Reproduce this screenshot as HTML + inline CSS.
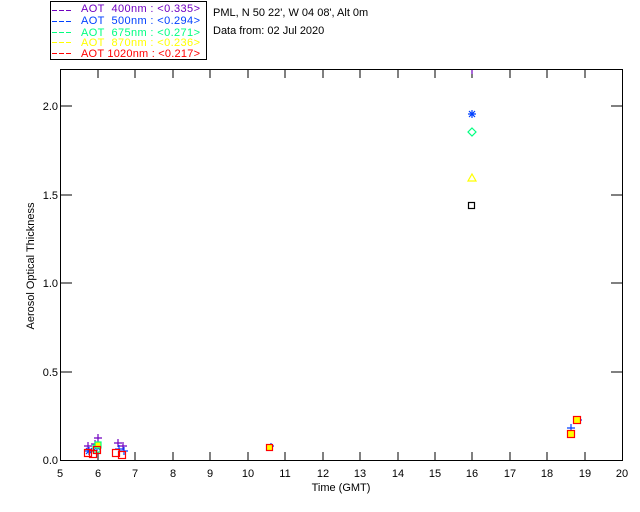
<!DOCTYPE html>
<html><head><style>body{margin:0;background:#fff}svg{display:block}text{font-family:"Liberation Sans",sans-serif;font-size:11px;white-space:pre}</style></head><body>
<svg width="640" height="512" xmlns="http://www.w3.org/2000/svg">
<rect width="640" height="512" fill="#fff"/>
<rect x="50.5" y="1.5" width="156" height="58" fill="none" stroke="#000"/>
<g stroke-width="1">
<path d="M52 10.5h20" stroke="#7000c0" stroke-dasharray="5 2"/>
<path d="M52 21.5h20" stroke="#0040ff" stroke-dasharray="5 2"/>
<path d="M52 32.5h20" stroke="#00ff80" stroke-dasharray="5 2"/>
<path d="M52 42.5h20" stroke="#ffff00" stroke-dasharray="5 2"/>
<path d="M52 53.5h20" stroke="#ff0000" stroke-dasharray="5 2"/>
</g>
<text x="81" y="12" fill="#7000c0" textLength="119" xml:space="preserve">AOT  400nm : &lt;0.335&gt;</text>
<text x="81" y="24" fill="#0040ff" textLength="119" xml:space="preserve">AOT  500nm : &lt;0.294&gt;</text>
<text x="81" y="36" fill="#00ff80" textLength="119" xml:space="preserve">AOT  675nm : &lt;0.271&gt;</text>
<text x="81" y="46" fill="#ffff00" textLength="119" xml:space="preserve">AOT  870nm : &lt;0.236&gt;</text>
<text x="81" y="57" fill="#ff0000" textLength="119" xml:space="preserve">AOT 1020nm : &lt;0.217&gt;</text>
<text x="213" y="16" fill="#000">PML, N 50 22', W 04 08', Alt 0m</text>
<text x="213" y="34" fill="#000">Data from: 02 Jul 2020</text>
<rect x="60.5" y="69.5" width="562" height="391" fill="none" stroke="#000"/>
<g stroke="#000">
<path d="M98 460v-8M135 460v-8M173 460v-8M210 460v-8M248 460v-8M285 460v-8M323 460v-8M360 460v-8M398 460v-8M435 460v-8M472 460v-8M510 460v-8M547 460v-8M585 460v-8"/>
<path d="M98 70v8M135 70v8M173 70v8M210 70v8M248 70v8M285 70v8M323 70v8M360 70v8M398 70v8M435 70v8M472 70v8M510 70v8M547 70v8M585 70v8"/>
<path d="M61 372h11M61 283h11M61 195h11M61 106h11M622 372h-11M622 283h-11M622 195h-11M622 106h-11"/>
</g>
<g fill="#000" text-anchor="middle">
<text x="60" y="477">5</text><text x="98" y="477">6</text><text x="135" y="477">7</text><text x="173" y="477">8</text><text x="210" y="477">9</text><text x="248" y="477">10</text><text x="285" y="477">11</text><text x="323" y="477">12</text><text x="360" y="477">13</text><text x="398" y="477">14</text><text x="435" y="477">15</text><text x="472" y="477">16</text><text x="510" y="477">17</text><text x="547" y="477">18</text><text x="585" y="477">19</text><text x="622" y="477">20</text>
<text x="341" y="491">Time (GMT)</text>
</g>
<g fill="#000" text-anchor="end">
<text x="58" y="464">0.0</text><text x="58" y="376">0.5</text><text x="58" y="287">1.0</text><text x="58" y="199">1.5</text><text x="58" y="110">2.0</text>
</g>
<text transform="translate(34,266) rotate(-90)" text-anchor="middle" fill="#000" font-size="10">Aerosol Optical Thickness</text>
<g fill="none" stroke-width="1.2">
<path d="M472 70v4" stroke="#7000c0"/>
<path d="M468 114h8M472 110v8M469 111l6 6M475 111l-6 6" stroke="#0040ff"/>
<path d="M472 128l4 4-4 4-4-4z" stroke="#00ff80"/>
<path d="M472 174l4 7h-8z" stroke="#ffff00"/>
<rect x="468.5" y="202.5" width="6" height="6" stroke="#000"/>
<path d="M84 446h8M88 442v8M91 444h8M95 440v8M94 438h8M98 434v8M114 443h8M118 439v8M119 446h8M123 442v8" stroke="#7000c0"/>
<path d="M85 451h8M89 447v8M86 448l6 6M92 448l-6 6M93 447h8M97 443v8M94 444l6 6M100 444l-6 6M115 449h8M119 445v8M120 451h8M124 447v8M268 446h6M271 443v6M567 428h8M571 424v8M574 420h8M578 416v8" stroke="#0040ff"/>
<rect x="93" y="445" width="7" height="7" stroke="#00ff80"/>
<rect x="95" y="442" width="6" height="6" fill="#ffff00" stroke="#00ff80"/>
<rect x="84.5" y="449.5" width="7" height="7" stroke="#ff0000"/>
<rect x="89.5" y="450.5" width="7" height="7" stroke="#ff0000"/>
<rect x="93.5" y="446.5" width="7" height="7" stroke="#ff0000"/>
<rect x="112.5" y="449.5" width="7" height="7" stroke="#ff0000"/>
<rect x="118.5" y="451.5" width="7" height="7" stroke="#ff0000"/>
<rect x="266.5" y="444.5" width="6" height="6" fill="#ffff00" stroke="#ff0000"/>
<rect x="567.5" y="430.5" width="7" height="7" fill="#ffff00" stroke="#ff0000"/>
<rect x="573.5" y="416.5" width="7" height="7" fill="#ffff00" stroke="#ff0000"/>
</g>
</svg>
</body></html>
